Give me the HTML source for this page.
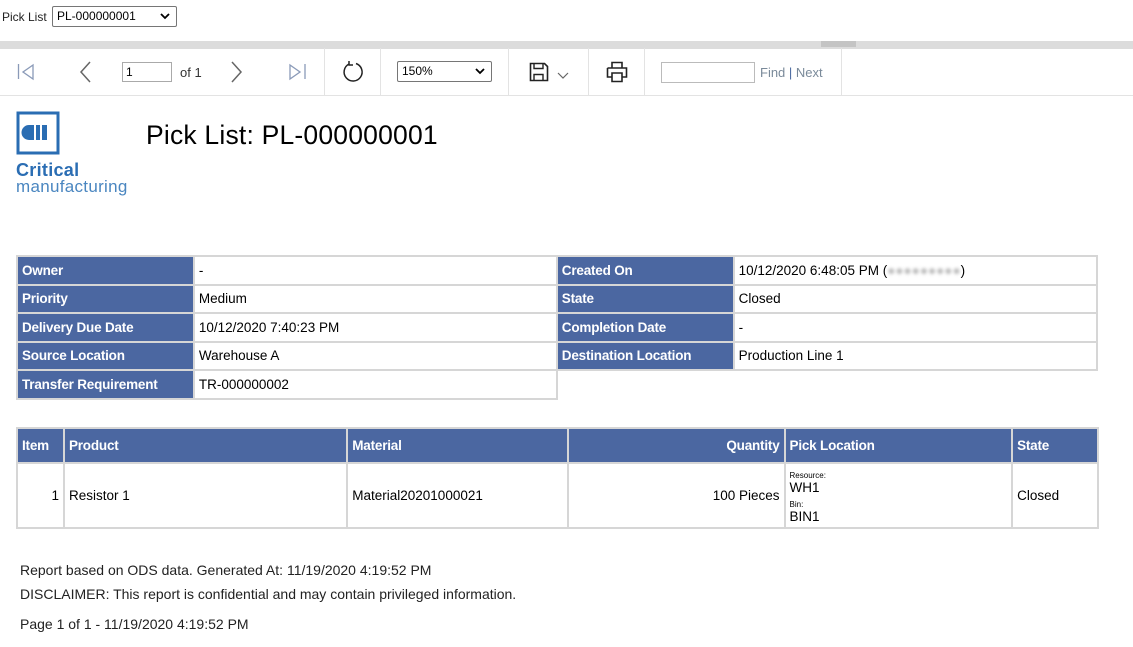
<!DOCTYPE html>
<html><head><meta charset="utf-8"><style>
*{box-sizing:border-box;margin:0;padding:0}
body{width:1133px;height:647px;background:#fff;font-family:"Liberation Sans",sans-serif;color:#000;position:relative;overflow:hidden}
.a{position:absolute}
.sel{border:1px solid #767676;border-radius:2px;background:#fff;font-size:12px;padding:2px 4px;}
table{border-collapse:collapse;position:absolute;font-size:13.5px}
td,th{border:2px solid #d6d6d6;height:28.5px;padding:0 4px;text-align:left;white-space:nowrap}
.h{background:#4b67a1;color:#fff;font-weight:bold;letter-spacing:-0.2px}
.sep{position:absolute;top:48px;width:1px;height:47px;background:#e3e3e3}
.ic{position:absolute}
</style></head><body>
<div class="a" style="left:2px;top:10px;font-size:12px;color:#222">Pick List</div>
<div class="a sel" style="left:52px;top:6px;width:125px;height:21px;font-size:12px">PL-000000001
<svg class="a" style="right:6px;top:6px" width="10" height="7" viewBox="0 0 10 7"><path d="M1 1l4 4 4-4" stroke="#000" stroke-width="1.8" fill="none"/></svg></div>
<div class="a" style="left:0;top:41px;width:1133px;height:8px;background:#dcdcdc"></div>
<div class="a" style="left:821px;top:41px;width:35px;height:6px;background:#c4c4c4"></div>
<div class="a" style="left:0;top:95px;width:1133px;height:1px;background:#e3e3e3"></div>
<div class="sep" style="left:324px"></div><div class="sep" style="left:380px"></div><div class="sep" style="left:508px"></div><div class="sep" style="left:588px"></div><div class="sep" style="left:644px"></div><div class="sep" style="left:841px"></div>
<svg class="ic" style="left:17px;top:63px" width="20" height="18"><path d="M1.5 1v15M16 2l-10 7 10 7z" stroke="#8a9ab8" stroke-width="1.3" fill="none"/></svg>
<svg class="ic" style="left:78px;top:61px" width="14" height="22"><path d="M12 1L3 11l9 10" stroke="#666" stroke-width="1.5" fill="none"/></svg>
<div class="a" style="left:122px;top:62px;width:50px;height:20px;border:1px solid #aaa;font-size:12px;padding:2px 3px">1</div>
<div class="a" style="left:180px;top:65px;font-size:13px;color:#333">of 1</div>
<svg class="ic" style="left:230px;top:61px" width="14" height="22"><path d="M2 1l9 10-9 10" stroke="#666" stroke-width="1.5" fill="none"/></svg>
<svg class="ic" style="left:287px;top:63px" width="20" height="18"><path d="M18 1v15M3 2l10 7-10 7z" stroke="#8a9ab8" stroke-width="1.3" fill="none"/></svg>
<svg class="ic" style="left:341px;top:60px" width="24" height="24"><path d="M8 4A9 9 0 1 0 15 3.5" stroke="#222" stroke-width="1.5" fill="none"/><path d="M8 1v4h4" stroke="#222" stroke-width="1.5" fill="none"/></svg>
<div class="a sel" style="left:397px;top:61px;width:95px;height:21px">150%<svg class="a" style="right:6px;top:6px" width="10" height="7"><path d="M1 1l4 4 4-4" stroke="#000" stroke-width="1.8" fill="none"/></svg></div>
<svg class="ic" style="left:529px;top:62px" width="20" height="20"><path d="M1.5 1.5h14l3 3v14h-17z" stroke="#222" stroke-width="1.6" fill="none"/><path d="M5 1.5v5h9v-5M5 18.5v-6h9v6" stroke="#222" stroke-width="1.4" fill="none"/></svg>
<svg class="ic" style="left:557px;top:72px" width="12" height="8"><path d="M1 1l5 5 5-5" stroke="#666" stroke-width="1.2" fill="none"/></svg>
<svg class="ic" style="left:606px;top:61px" width="22" height="22"><path d="M6 7V1.5h10V7M1.5 7h19v9H16M6 16H1.5V7M6 12h10v8.5H6z" stroke="#222" stroke-width="1.6" fill="none"/></svg>
<div class="a" style="left:661px;top:62px;width:94px;height:21px;border:1px solid #bbb"></div>
<div class="a" style="left:760px;top:65px;font-size:13px;color:#7a8a9a">Find <span style="color:#4b6aa0">|</span> Next</div>
<svg class="ic" style="left:16px;top:111px" width="44" height="44"><rect x="2" y="2" width="40" height="40" stroke="#2a6db3" stroke-width="3" fill="none"/><path d="M13 14h5v15h-5a7.5 7.5 0 0 1 0-15zM20 14h4v15h-4zM26 14h5v15h-5z" fill="#2a6db3"/></svg>
<div class="a" style="left:16px;top:160px;font-size:18px;font-weight:bold;color:#2a6db3;letter-spacing:0.3px">Critical</div>
<div class="a" style="left:16px;top:177px;font-size:17px;color:#4a86c0;letter-spacing:0.3px">manufacturing</div>
<div class="a" style="left:146px;top:120px;font-size:26.5px;color:#000;letter-spacing:0.2px">Pick List: PL-000000001</div>
<table style="left:16px;top:255px;width:1082px">
<colgroup><col style="width:177px"><col style="width:364px"><col style="width:177px"><col style="width:364px"></colgroup>
<tr><td class="h">Owner</td><td>-</td><td class="h">Created On</td><td>10/12/2020 6:48:05 PM (<span style="color:#bbb;filter:blur(1.5px)">●●●●●●●●●</span>)</td></tr>
<tr><td class="h">Priority</td><td>Medium</td><td class="h">State</td><td>Closed</td></tr>
<tr><td class="h">Delivery Due Date</td><td>10/12/2020 7:40:23 PM</td><td class="h">Completion Date</td><td>-</td></tr>
<tr><td class="h">Source Location</td><td>Warehouse A</td><td class="h">Destination Location</td><td>Production Line 1</td></tr>
<tr><td class="h">Transfer Requirement</td><td>TR-000000002</td><td style="border:none"></td><td style="border:none"></td></tr>
</table>
<table style="left:16px;top:427px;width:1083px">
<colgroup><col style="width:47px"><col style="width:284px"><col style="width:221px"><col style="width:217px"><col style="width:228px"><col style="width:86px"></colgroup>
<tr style="height:35px"><td class="h">Item</td><td class="h">Product</td><td class="h">Material</td><td class="h" style="text-align:right">Quantity</td><td class="h">Pick Location</td><td class="h">State</td></tr>
<tr style="height:65px"><td style="text-align:right">1</td><td>Resistor 1</td><td>Material20201000021</td><td style="text-align:right">100 Pieces</td><td style="line-height:1.05"><span style="font-size:8px">Resource:</span><br>WH1<br><span style="font-size:8px">Bin:</span><br>BIN1</td><td>Closed</td></tr>
</table>
<div class="a" style="left:20px;top:562px;font-size:14px;color:#222">Report based on ODS data. Generated At: 11/19/2020 4:19:52 PM</div>
<div class="a" style="left:20px;top:586px;font-size:14px;color:#222">DISCLAIMER: This report is confidential and may contain privileged information.</div>
<div class="a" style="left:20px;top:616px;font-size:14px;color:#222">Page 1 of 1 - 11/19/2020 4:19:52 PM</div>
</body></html>
